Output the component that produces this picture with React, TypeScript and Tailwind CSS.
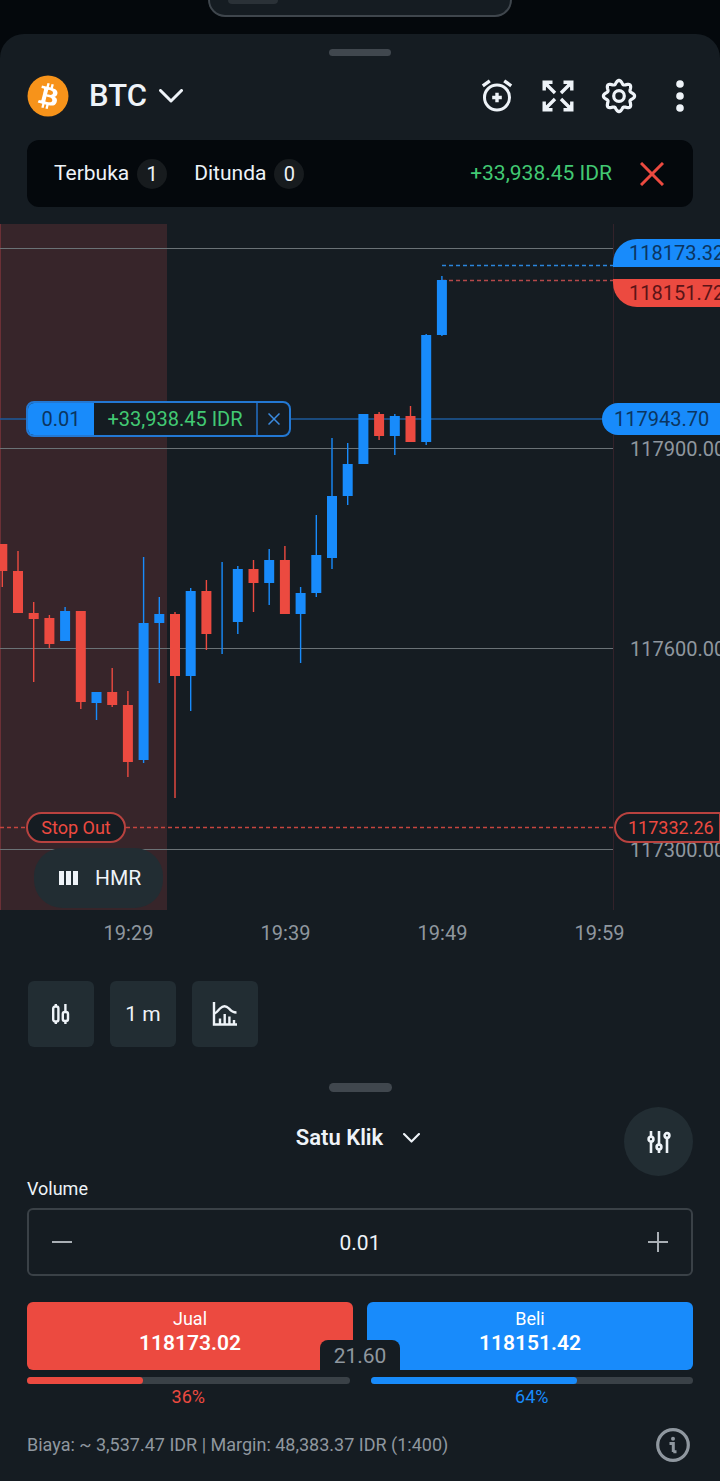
import { useState } from "react";

interface Candle {
  up: boolean;
  high: number;
  top: number;
  bottom: number;
  low: number;
}

// one candle per minute, values are y positions inside the plot
const candles: Candle[] = [
  { up: false, high: 320, top: 320, bottom: 347, low: 363 },
  { up: false, high: 327, top: 347, bottom: 389, low: 389 },
  { up: false, high: 378, top: 389, bottom: 395, low: 458 },
  { up: false, high: 391, top: 394, bottom: 420, low: 424 },
  { up: true, high: 383, top: 387, bottom: 417, low: 417 },
  { up: false, high: 387, top: 387, bottom: 478, low: 485 },
  { up: true, high: 468, top: 468, bottom: 479, low: 496 },
  { up: false, high: 444, top: 468, bottom: 481, low: 483 },
  { up: false, high: 467, top: 481, bottom: 538, low: 553 },
  { up: true, high: 333, top: 399, bottom: 536, low: 539 },
  { up: true, high: 373, top: 390, bottom: 399, low: 459 },
  { up: false, high: 388, top: 390, bottom: 452, low: 574 },
  { up: true, high: 364, top: 367, bottom: 452, low: 487 },
  { up: false, high: 356, top: 367, bottom: 410, low: 426 },
  { up: true, high: 338, top: 367, bottom: 367, low: 430 },
  { up: true, high: 342, top: 345, bottom: 398, low: 410 },
  { up: false, high: 336, top: 345, bottom: 359, low: 388 },
  { up: true, high: 325, top: 336, bottom: 359, low: 381 },
  { up: false, high: 322, top: 336, bottom: 390, low: 390 },
  { up: true, high: 363, top: 369, bottom: 390, low: 439 },
  { up: true, high: 291, top: 331, bottom: 369, low: 373 },
  { up: true, high: 214, top: 272, bottom: 334, low: 345 },
  { up: true, high: 219, top: 240, bottom: 272, low: 281 },
  { up: true, high: 190, top: 190, bottom: 240, low: 240 },
  { up: false, high: 188, top: 190, bottom: 212, low: 216 },
  { up: true, high: 190, top: 192, bottom: 212, low: 231 },
  { up: false, high: 182, top: 192, bottom: 218, low: 218 },
  { up: true, high: 110, top: 111, bottom: 218, low: 221 },
  { up: true, high: 52, top: 56, bottom: 111, low: 112 },
];

const times = ["19:29", "19:39", "19:49", "19:59"];

// eight rounded teeth around the centre
const gearPoints = Array.from({ length: 120 }, (_, i) => {
  const a = (i / 120) * Math.PI * 2;
  const r = 13.8 + 1.8 * Math.cos(8 * a);
  return `${(18 + r * Math.cos(a)).toFixed(2)},${(18 + r * Math.sin(a)).toFixed(2)}`;
}).join(" ");

function BitcoinLogo() {
  return (
    <svg viewBox="0 0 32 32" className="size-[42px]" aria-hidden="true">
      <circle cx="16" cy="16" r="15.6" fill="#f7931a" />
      <path
        fill="#fff"
        d="M23.189 14.02c.314-2.096-1.283-3.223-3.465-3.975l.708-2.84-1.728-.43-.69 2.765c-.454-.114-.92-.22-1.385-.326l.695-2.783L15.596 6l-.708 2.839c-.376-.086-.746-.17-1.104-.26l.002-.009-2.384-.595-.46 1.846s1.283.294 1.256.312c.7.175.826.638.805 1.006l-.806 3.235c.048.012.11.03.18.057l-.183-.045-1.13 4.532c-.086.212-.303.531-.793.41.018.025-1.256-.313-1.256-.313l-.858 1.978 2.25.561c.418.105.828.215 1.231.318l-.715 2.872 1.727.43.708-2.84c.472.127.93.245 1.378.357l-.706 2.828 1.728.43.715-2.866c2.948.558 5.164.333 6.097-2.333.752-2.146-.037-3.385-1.588-4.192 1.13-.26 1.98-1.003 2.207-2.538zm-3.95 5.538c-.533 2.147-4.148.986-5.32.695l.95-3.805c1.172.293 4.929.872 4.37 3.11zm.535-5.569c-.487 1.953-3.495.96-4.47.717l.86-3.45c.975.243 4.118.696 3.61 2.733z"
      />
    </svg>
  );
}

function ChevronIcon({ className }: { className: string }) {
  return (
    <svg viewBox="0 0 24 14" fill="none" stroke="currentColor" strokeLinecap="round" strokeLinejoin="round" className={className} aria-hidden="true">
      <path d="M1.500 1.500L12 12L22.500 1.500" strokeWidth="3" />
    </svg>
  );
}

function AlarmIcon() {
  return (
    <svg viewBox="0 0 36 36" fill="none" stroke="currentColor" strokeWidth="3" className="size-9" aria-hidden="true">
      <circle cx="18" cy="19.500" r="12.500" />
      <path d="M18 14.700V24.300M13.200 19.500H22.800" strokeWidth="3.400" />
      <path d="M3.800 7.800L10.800 2.800M32.200 7.800L25.200 2.800" strokeWidth="3.400" />
    </svg>
  );
}

function ExpandIcon() {
  return (
    <svg viewBox="0 0 36 36" fill="none" stroke="currentColor" strokeWidth="3.400" className="size-9" aria-hidden="true">
      <path d="M12.500 4.200H4.200V12.500M23.500 4.200H31.800V12.500M4.200 23.500V31.800H12.500M31.800 23.500V31.800H23.500" />
      <path d="M4.500 4.500L15 15M31.500 4.500L21 15M4.500 31.500L15 21M31.500 31.500L21 21" />
      <path fill="currentColor" stroke="none" d="M3 3H12L3 12ZM33 3H24L33 12ZM3 33H12L3 24ZM33 33H24L33 24Z" />
    </svg>
  );
}

function GearIcon() {
  return (
    <svg viewBox="0 0 36 36" fill="none" stroke="currentColor" strokeWidth="3.200" strokeLinejoin="round" className="size-9" aria-hidden="true">
      <polygon points={gearPoints} />
      <circle cx="18" cy="18" r="5.300" />
    </svg>
  );
}

function DotsIcon() {
  return (
    <svg viewBox="0 0 36 36" fill="currentColor" className="size-9" aria-hidden="true">
      <circle cx="18" cy="6" r="3.800" />
      <circle cx="18" cy="18" r="3.800" />
      <circle cx="18" cy="30" r="3.800" />
    </svg>
  );
}

function CloseIcon({ className }: { className: string }) {
  return (
    <svg viewBox="0 0 24 24" fill="none" stroke="currentColor" strokeWidth="3" className={className} aria-hidden="true">
      <path d="M1 1L23 23M23 1L1 23" />
    </svg>
  );
}

function CandlesIcon() {
  return (
    <svg viewBox="0 0 24 24" fill="none" stroke="currentColor" strokeWidth="2.400" className="size-6" aria-hidden="true">
      <rect x="4.200" y="4.500" width="5.200" height="15" rx="2" />
      <rect x="13.800" y="10" width="5.200" height="9" rx="2" />
      <path d="M6.800 2V4.500M6.800 19.500V22M16.400 2V10M16.400 19V22" />
    </svg>
  );
}

function IndicatorIcon() {
  return (
    <svg viewBox="0 0 26 26" fill="none" stroke="currentColor" strokeWidth="2.400" className="size-[26px]" aria-hidden="true">
      <path d="M2 1V23.500H25" />
      <path d="M2.500 12.500C5 11.500 6 9.500 8 7.500C11 4.500 14 4.500 17 7.500C19 10 20.500 11.500 24.500 11.500" />
      <path d="M8 23V17.500M12.700 23V13M17.400 23V15.500M22 23V19" />
    </svg>
  );
}

function SlidersIcon() {
  return (
    <svg viewBox="0 0 24 24" fill="none" stroke="currentColor" strokeWidth="2.600" className="size-6" aria-hidden="true">
      <path d="M4 1V6.500M4 12V23M12 1V14M12 19.500V23M20 9V23" />
      <circle cx="4" cy="9.200" r="2.400" />
      <circle cx="12" cy="17" r="2.400" />
      <circle cx="20" cy="5.500" r="2.400" />
    </svg>
  );
}

function InfoIcon() {
  return (
    <svg viewBox="0 0 36 36" fill="none" stroke="currentColor" strokeWidth="3.200" className="size-9" aria-hidden="true">
      <circle cx="18" cy="18" r="15.300" />
      <path d="M14.500 16.500H18.300V25M18.300 24.700H21.500" strokeWidth="3" />
      <circle cx="18" cy="11.800" r="2" fill="currentColor" stroke="none" />
    </svg>
  );
}

function Plot() {
  return (
    <svg className="block h-full w-full" aria-hidden="true">
      <rect width="167" height="686" fill="#37252a" />
      <path d="M.5 0V686" stroke="#6b3036" />
      <g stroke="#6a7276" shapeRendering="crispEdges">
        <line x1="0" x2="100%" y1="24" y2="24" />
        <line x1="0" x2="100%" y1="224" y2="224" />
        <line x1="0" x2="100%" y1="424" y2="424" />
        <line x1="0" x2="100%" y1="625" y2="625" />
      </g>
      <line x1="0" x2="100%" y1="195" y2="195" stroke="#1d5a9c" strokeWidth="1.500" />
      <line x1="442" x2="100%" y1="41.500" y2="41.500" stroke="#2b85dc" strokeWidth="1.400" strokeDasharray="4 3" />
      <line x1="442" x2="100%" y1="56.500" y2="56.500" stroke="#b5484a" strokeWidth="1.400" strokeDasharray="4 3" />
      <line x1="0" x2="100%" y1="603.500" y2="603.500" stroke="#c6453f" strokeWidth="1.400" strokeDasharray="4 3" />
      {candles.map((c, i) => {
        const x = 2.3 + i * 15.7;
        return (
          <g key={i} fill={c.up ? "#188bfb" : "#ec4a40"}>
            <rect x={x - 0.7} y={c.high} width="1.400" height={c.low - c.high} />
            <rect x={x - 5} y={c.top} width="10" height={c.bottom - c.top} />
          </g>
        );
      })}
    </svg>
  );
}

export default function App() {
  const [volume, setVolume] = useState(0.01);

  const changeVolume = (step: number) =>
    setVolume((v) => Math.max(0.01, v + step));

  return (
    <div className="min-h-screen overflow-hidden bg-[#04080c] font-[Roboto,sans-serif] text-[#eef3f8]">
      <div className="flex h-[34px] items-start justify-center">
        <div className="flex h-[17px] w-[304px] rounded-b-[28px] border-2 border-t-0 border-[#3f464d] bg-[#151c22] pl-[18px]">
          <div className="h-1 w-[50px] rounded-b-lg bg-[#2a3137]" />
        </div>
      </div>

      <main className="rounded-t-[24px] bg-[#151c22] pt-[15px]">
        <div className="mx-auto h-[7px] w-[62px] rounded-full bg-[#40474e]" />

        <header className="mt-[19px] flex h-[42px] items-center px-[27px]">
          <BitcoinLogo />
          <button type="button" className="ml-5 flex items-center gap-3 text-[31px] leading-[44px] font-medium">
            BTC
            <ChevronIcon className="h-[14px] w-6" />
          </button>
          <div className="-mr-[5px] ml-auto flex items-center gap-[25px]">
            <button type="button" aria-label="Alarm"><AlarmIcon /></button>
            <button type="button" aria-label="Layar penuh"><ExpandIcon /></button>
            <button type="button" aria-label="Pengaturan"><GearIcon /></button>
            <button type="button" aria-label="Lainnya"><DotsIcon /></button>
          </div>
        </header>

        <section className="mx-[27px] mt-[23px] flex h-[67px] items-center rounded-xl bg-[#04080c] pr-[29px] pl-[27px] text-[21px] leading-[33px]">
          <button type="button" className="flex items-center gap-2">
            Terbuka
            <span className="flex size-[30px] items-center justify-center rounded-full bg-[#171b1e] text-xl">1</span>
          </button>
          <button type="button" className="ml-[27px] flex items-center gap-2">
            Ditunda
            <span className="flex size-[30px] items-center justify-center rounded-full bg-[#171b1e] text-xl">0</span>
          </button>
          <span className="ml-auto text-[#42c973]">+33,938.45 IDR</span>
          <button type="button" aria-label="Tutup semua" className="ml-[28px] text-[#ec4a40]">
            <CloseIcon className="size-6" />
          </button>
        </section>

        <section className="mt-[17px] flex h-[686px] text-xl leading-[28px]">
          <div className="relative min-w-0 flex-1">
            <Plot />
            <div className="absolute top-[177px] left-[26px] flex h-[36px] items-stretch overflow-hidden rounded-lg border-2 border-[#2378d3] bg-[#151c22]">
              <span className="flex w-[66px] items-center justify-center bg-[#188bfb] text-[#0b3561]">0.01</span>
              <span className="flex w-[162px] items-center justify-center text-[#42c973]">+33,938.45 IDR</span>
              <button type="button" aria-label="Tutup posisi" className="flex w-[33px] items-center justify-center border-l-2 border-[#1f5a9c] text-[#3b8be0]">
                <CloseIcon className="size-3" />
              </button>
            </div>
            <div className="absolute top-[588px] left-[26px] flex h-[31px] w-[100px] items-center justify-center rounded-full border-2 border-[#b8423f] bg-[#151c22] text-lg text-[#ec4a40]">
              Stop Out
            </div>
            <button type="button" className="absolute top-[624px] left-[34px] flex h-[60px] w-[129px] items-center rounded-[28px] bg-[#222d33] pl-[25px] text-[21px]">
              <svg viewBox="0 0 19 14" fill="currentColor" className="h-[14px] w-[19px]" aria-hidden="true">
                <path d="M0 0H5V14H0ZM7 0H12V14H7ZM14 0H19V14H14Z" />
              </svg>
              <span className="ml-[17px]">HMR</span>
            </button>
          </div>

          <div className="relative w-[107px] border-l border-[#33222a] text-[#8f979f]">
            <span className="absolute top-[211px] left-4">117900.00</span>
            <span className="absolute top-[411px] left-4">117600.00</span>
            <span className="absolute top-[612px] left-4">117300.00</span>
            <div className="absolute top-[15px] -left-px h-[28px] w-[130px] rounded-tl-[24px] bg-[#188bfb] pl-4 text-[#0b3561]">118173.32</div>
            <div className="absolute top-[55px] -left-px h-[28px] w-[130px] rounded-bl-[24px] bg-[#ec4a40] pl-4 text-[#5b1417]">118151.72</div>
            <div className="absolute top-[179px] -left-3 flex h-[32px] w-[140px] items-center rounded-l-full bg-[#188bfb] pl-3 text-[#0b3561]">117943.70</div>
            <div className="absolute top-[588px] left-0 flex h-[31px] w-[107px] items-center rounded-l-full border-2 border-[#b8423f] bg-[#151c22] pl-3 text-lg text-[#ec4a40]">117332.26</div>
          </div>
        </section>

        <div className="flex h-[45px] items-center pl-[50px] text-xl text-[#8f979f]">
          {times.map((time) => (
            <span key={time} className="w-[157px] shrink-0 text-center">{time}</span>
          ))}
        </div>

        <div className="mt-[26px] flex gap-4 px-[28px]">
          <button type="button" aria-label="Jenis grafik" className="flex size-[66px] items-center justify-center rounded-md bg-[#222d33]">
            <CandlesIcon />
          </button>
          <button type="button" className="flex size-[66px] items-center justify-center rounded-md bg-[#222d33] text-[21px] leading-[28px]">
            1 m
          </button>
          <button type="button" aria-label="Indikator" className="flex size-[66px] items-center justify-center rounded-md bg-[#222d33]">
            <IndicatorIcon />
          </button>
        </div>

        <section className="px-[27px] pt-[36px]">
          <div className="mx-auto h-[9px] w-[63px] rounded-full bg-[#40474e]" />

          <div className="mt-[15px] grid h-[69px] grid-cols-[1fr_auto_1fr] items-center">
            <span />
            <button type="button" className="-mt-2 flex items-center gap-5 pr-1 text-[22px] leading-[26px] font-semibold">
              Satu Klik
              <ChevronIcon className="h-[10px] w-[17px]" />
            </button>
            <button type="button" aria-label="Pengaturan order" className="flex size-[69px] items-center justify-center justify-self-end rounded-full bg-[#222d33]">
              <SlidersIcon />
            </button>
          </div>

          <label htmlFor="volume" className="mt-[2px] block text-lg leading-[22px]">Volume</label>
          <div className="mt-2 flex h-[68px] items-stretch rounded-md border-2 border-[#3a4147] text-[#a9afb5]">
            <button type="button" aria-label="Kurangi volume" className="flex w-[66px] items-center justify-center" onClick={() => changeVolume(-0.01)}>
              <svg viewBox="0 0 20 20" stroke="currentColor" strokeWidth="2" className="size-5" aria-hidden="true"><path d="M0 10H20" /></svg>
            </button>
            <input
              id="volume"
              type="text"
              inputMode="decimal"
              className="min-w-0 flex-1 bg-transparent pt-[2px] text-center text-[21px] leading-[28px] text-[#eef3f8] outline-none"
              value={volume.toFixed(2)}
              onChange={(e) => setVolume(Number(e.target.value) || 0)}
            />
            <button type="button" aria-label="Tambah volume" className="flex w-[66px] items-center justify-center" onClick={() => changeVolume(0.01)}>
              <svg viewBox="0 0 20 20" stroke="currentColor" strokeWidth="2" className="size-5" aria-hidden="true"><path d="M0 10H20M10 0V20" /></svg>
            </button>
          </div>

          <div className="relative mt-[26px] grid grid-cols-2 gap-[14px] text-white">
            <button type="button" className="flex h-[68px] flex-col items-center rounded-md bg-[#ec4a40] pt-[5px]">
              <span className="text-lg leading-[24px]">Jual</span>
              <span className="text-[21px] leading-[24px] font-semibold">118173.02</span>
            </button>
            <button type="button" className="flex h-[68px] flex-col items-center rounded-md bg-[#188bfb] pt-[5px]">
              <span className="text-lg leading-[24px]">Beli</span>
              <span className="text-[21px] leading-[24px] font-semibold">118151.42</span>
            </button>
            <span className="absolute bottom-0 left-1/2 flex h-[30px] w-20 -translate-x-1/2 items-center justify-center rounded-t-lg bg-[#151c22] pt-[2px] text-[21px] leading-[28px] text-[#8f979f]">
              21.60
            </span>
          </div>

          <div className="mt-[7px] grid grid-cols-2 gap-[21px] text-center text-lg leading-[26px]">
            <div className="text-[#ec4a40]">
              <div className="h-[7px] overflow-hidden rounded-full bg-[#3a4147]">
                <div className="h-full w-[36%] rounded-r-full bg-[#ec4a40]" />
              </div>
              36%
            </div>
            <div className="text-[#188bfb]">
              <div className="h-[7px] overflow-hidden rounded-full bg-[#3a4147]">
                <div className="h-full w-[64%] rounded-r-full bg-[#188bfb]" />
              </div>
              64%
            </div>
          </div>

          <footer className="mt-[17px] flex items-center justify-between pr-[2px] pb-[18px] text-[#8f979f]">
            <p className="text-lg leading-[24px]">Biaya: ~ 3,537.47 IDR | Margin: 48,383.37 IDR (1:400)</p>
            <button type="button" aria-label="Informasi"><InfoIcon /></button>
          </footer>
        </section>
      </main>
    </div>
  );
}
